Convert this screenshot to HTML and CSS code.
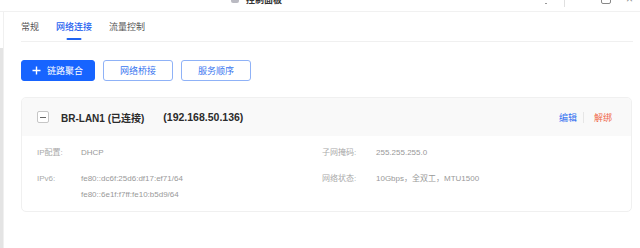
FILE: index.html
```html
<!DOCTYPE html>
<html lang="zh-CN">
<head>
<meta charset="utf-8">
<title>网络连接</title>
<link rel="stylesheet" href="styles.css">
</head>
<body>
<div class="window">
  <header class="titlebar">
    <div class="titlebar-inner">
      <div class="app-title"><span class="app-icon"></span><span class="app-name">控制面板</span></div>
      <div class="win-controls">
        <span class="wc wc-min"></span>
        <span class="wc-sep"></span>
        <span class="wc wc-max"></span>
        <span class="wc wc-close">×</span>
      </div>
    </div>
  </header>
  <div class="frame">
    <aside class="side"><div class="thumb"></div></aside>
    <main class="main">
      <nav class="tabs">
        <span class="tab">常规</span>
        <span class="tab active">网络连接</span>
        <span class="tab">流量控制</span>
      </nav>
      <div class="actions">
        <button class="btn btn-primary"><svg class="plus" width="9" height="9" viewBox="0 0 9 9"><path d="M4.5 0.5v8M0.5 4.5h8" stroke="#fff" stroke-width="1.4"/></svg>链路聚合</button>
        <button class="btn btn-outline">网络桥接</button>
        <button class="btn btn-outline">服务顺序</button>
      </div>
      <section class="card">
        <div class="card-head">
          <span class="checkbox"><span class="minus"></span></span>
          <span class="head-title">BR-LAN1 (已连接)</span>
          <span class="head-ip">(192.168.50.136)</span>
          <div class="head-actions">
            <a class="link link-edit">编辑</a>
            <span class="link-sep"></span>
            <a class="link link-unbind">解绑</a>
          </div>
        </div>
        <div class="card-body">
          <div class="field">
            <span class="label">IP配置:</span>
            <span class="value">DHCP</span>
          </div>
          <div class="field field-right">
            <span class="label">子网掩码:</span>
            <span class="value">255.255.255.0</span>
          </div>
          <div class="field">
            <span class="label">IPv6:</span>
            <span class="value">fe80::dc6f:25d6:df17:ef71/64<br>fe80::6e1f:f7ff:fe10:b5d9/64</span>
          </div>
          <div class="field field-right">
            <span class="label">网络状态:</span>
            <span class="value">10Gbps，全双工，MTU1500</span>
          </div>
        </div>
      </section>
    </main>
  </div>
</div>
</body>
</html>
```
FILE: styles.css
```css
* { box-sizing: border-box; }
html, body { margin: 0; padding: 0; background: #fff; }
body {
  font-family: "Liberation Sans", "Noto Sans CJK SC", sans-serif;
  width: 640px;
  height: 248px;
  overflow: hidden;
}
.window { display: flex; flex-direction: column; height: 248px; }

.titlebar {
  height: 12px;
  border-bottom: 1px solid #f1f1f1;
  overflow: hidden;
  flex: none;
}
.titlebar-inner {
  height: 20px;
  margin-top: -11px;
  display: flex;
  align-items: center;
}
.app-title {
  display: flex;
  align-items: center;
  margin-left: 231px;
  gap: 7px;
}
.app-icon {
  width: 8px; height: 8px;
  background: #8c8c99;
  border-radius: 2px;
  opacity: 0.6;
}
.app-name { font-size: 9px; color: #333; font-weight: bold; }
.win-controls {
  margin-left: auto;
  display: flex;
  align-items: center;
  margin-right: 7px;
}
.wc-min { width: 2px; height: 1px; background: #999; margin-right: 17px; margin-top: 9px; }
.wc-sep { width: 1px; height: 16px; background: #e0e0e0; margin-right: 36px; }
.wc-max { width: 10px; height: 10px; border: 1px solid #888; border-radius: 2px; margin-right: 15px; }
.wc-close { font-size: 12px; color: #888; line-height: 1; }

.frame { flex: 1; display: flex; }
.side { width: 3px; padding-top: 36px; flex: none; }
.thumb { background: #e4e4e4; height: 100%; }
.main {
  flex: 1;
  border-left: 1px solid #f0f0f0;
  padding: 0 7px 0 17px;
}

.tabs {
  display: flex;
  gap: 17px;
  height: 30px;
  border-bottom: 1px solid #f0f0f0;
  align-items: center;
}
.tab {
  font-size: 9px;
  color: #555;
  position: relative;
  height: 30px;
  line-height: 31px;
}
.tab.active { color: #1f63f0; font-weight: 500; }
.tab.active::after {
  content: "";
  position: absolute;
  left: 50%;
  transform: translateX(-50%);
  width: 15px;
  height: 2px;
  bottom: 2px;
  background: #1f63f0;
  border-radius: 1px;
}

.actions { display: flex; gap: 8px; margin-top: 18px; }
.btn {
  height: 21px;
  font-family: inherit;
  font-size: 9px;
  border-radius: 3px;
  display: flex;
  align-items: center;
  padding: 0 16px;
  cursor: pointer;
}
.btn-primary {
  background: #1764ff;
  border: 1px solid #1764ff;
  color: #fff;
  padding: 0 11px 0 10px;
  gap: 6px;
}
.plus { display: block; }
.btn-outline {
  background: #fff;
  border: 1px solid #8fb2f7;
  color: #3b77f0;
}

.card {
  margin-top: 16px;
  border: 1px solid #f0f0f0;
  border-radius: 5px;
  overflow: hidden;
  margin-right: 1px;
}
.card-head {
  height: 38px;
  background: #f9f9f9;
  display: flex;
  align-items: center;
  padding: 0 19px 0 15px;
}
.checkbox {
  width: 12px; height: 12px;
  border: 1px solid #c6c6c6;
  border-radius: 2px;
  background: #fff;
  display: flex;
  align-items: center;
  justify-content: center;
  margin-right: 12px;
}
.minus { width: 6px; height: 1px; background: #666; }
.head-title, .head-ip {
  font-size: 10px;
  font-weight: bold;
  color: #2b2b2b;
}
.head-ip { margin-left: 19px; font-size: 10.5px; }
.head-actions { margin-left: auto; display: flex; align-items: center; }
.link { font-size: 9px; }
.link-edit { color: #2f6ff0; }
.link-unbind { color: #f0674a; }
.link-sep { width: 1px; height: 11px; background: #e6e6e6; margin: 0 10px 0 6px; }

.card-body {
  display: grid;
  grid-template-columns: 285px 1fr;
  row-gap: 10px;
  padding: 9px 16px 8px 15px;
}
.field { display: flex; font-size: 8px; line-height: 16px; }
.label { color: #aaa; width: 44px; flex: none; }
.field-right .label { width: 54px; }
.value { color: #999; }
```
